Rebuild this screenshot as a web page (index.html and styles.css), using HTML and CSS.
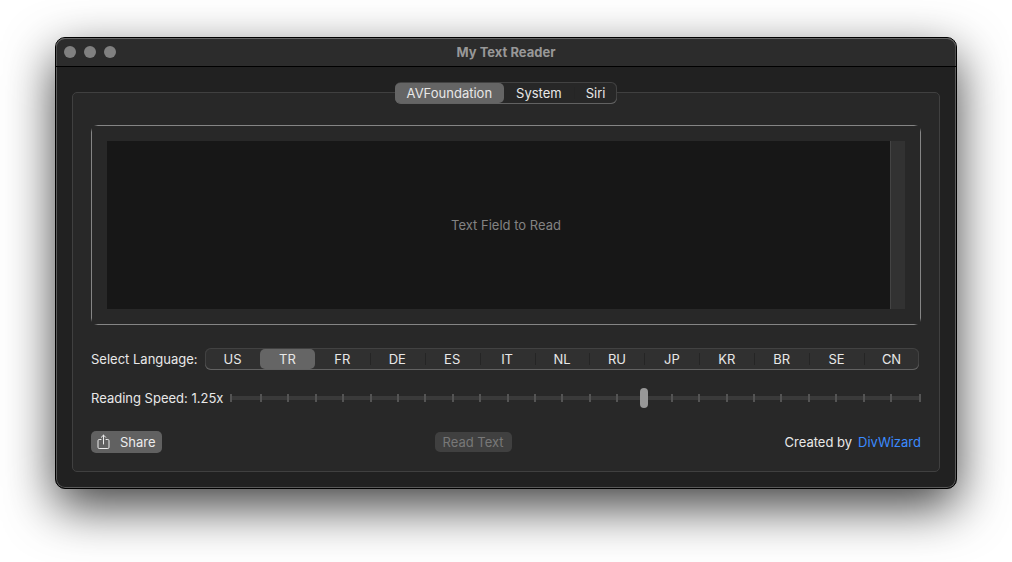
FILE: index.html
```html
<!DOCTYPE html>
<html lang="en">
<head>
<meta charset="utf-8">
<title>My Text Reader</title>
<link rel="stylesheet" href="styles.css">
</head>
<body>
<main class="window">
  <header class="titlebar">
    <div class="lights"><i></i><i></i><i></i></div>
    <h1 class="title">My Text Reader</h1>
  </header>
  <div class="content">
    <div class="segmented tabs" role="radiogroup" aria-label="Speech engine">
      <label class="segment"><input type="radio" name="engine" checked>AVFoundation</label>
      <label class="segment"><input type="radio" name="engine">System</label>
      <label class="segment"><input type="radio" name="engine">Siri</label>
    </div>
    <section class="panel">
      <div class="frame">
        <div class="editor">
          <textarea class="text" aria-label="Text to read" placeholder="Text Field to Read"></textarea>
          <div class="scroller"></div>
        </div>
      </div>
      <div class="row language">
        <span class="label" id="language-label">Select Language:</span>
        <div class="segmented languages" role="radiogroup" aria-labelledby="language-label">
          <label class="segment"><input type="radio" name="language">US</label>
          <label class="segment"><input type="radio" name="language" checked>TR</label>
          <label class="segment"><input type="radio" name="language">FR</label>
          <label class="segment"><input type="radio" name="language">DE</label>
          <label class="segment"><input type="radio" name="language">ES</label>
          <label class="segment"><input type="radio" name="language">IT</label>
          <label class="segment"><input type="radio" name="language">NL</label>
          <label class="segment"><input type="radio" name="language">RU</label>
          <label class="segment"><input type="radio" name="language">JP</label>
          <label class="segment"><input type="radio" name="language">KR</label>
          <label class="segment"><input type="radio" name="language">BR</label>
          <label class="segment"><input type="radio" name="language">SE</label>
          <label class="segment"><input type="radio" name="language">CN</label>
        </div>
      </div>
      <div class="row speed">
        <label class="label speed-label" for="speed">Reading Speed: 1.25x</label>
        <div class="slider">
          <div class="ticks"><i></i><i></i><i></i><i></i><i></i><i></i><i></i><i></i><i></i><i></i><i></i><i></i><i></i><i></i><i></i><i></i><i></i><i></i><i></i><i></i><i></i><i></i><i></i><i></i></div>
          <input class="range" id="speed" type="range" min="50" max="175" step="5" value="125">
        </div>
      </div>
      <footer class="row actions">
        <button class="button share" type="button">
          <svg width="13" height="16" viewBox="0 0 13 16" fill="none" stroke="currentColor" stroke-linecap="round" stroke-linejoin="round" aria-hidden="true">
            <path d="M4 5.5H2.2Q1 5.5 1 6.7V13.3Q1 14.5 2.2 14.5H10.8Q12 14.5 12 13.3V6.7Q12 5.5 10.8 5.5H9M6.5 10V1.2M4.3 3.3L6.5 1.1L8.7 3.3"/>
          </svg>
          Share
        </button>
        <button class="button read" type="button" disabled>Read Text</button>
        <p class="credit">Created by <a class="link" href="#">DivWizard</a></p>
      </footer>
    </section>
  </div>
</main>
</body>
</html>
```
FILE: styles.css
```css
* {
  box-sizing: border-box;
}

body {
  margin: 0;
  padding: 37px 55px 73px;
  background: #fff;
  color: #e8e8e8;
  font: 400 13px/16px Inter, "Liberation Sans", sans-serif;
}

.window {
  border: 1px solid #000;
  border-radius: 10px;
  background: #212121;
  box-shadow: inset 0 0 0 1px #5a5a5a, 0 18px 50px rgba(0, 0, 0, 0.75);
}

.titlebar {
  display: grid;
  grid-template-columns: 1fr auto 1fr;
  align-items: center;
  height: 29px;
  padding: 0 8px;
  border-bottom: 1px solid #000;
  border-radius: 9px 9px 0 0;
  background: #2c2c2c;
  box-shadow: inset 0 1px #666, inset 1px 0 #505050, inset -1px 0 #505050;
}

.lights {
  display: flex;
  gap: 8px;
}

.lights i {
  width: 12px;
  height: 12px;
  border-radius: 50%;
  background: #808080;
}

.title {
  margin: 0;
  color: #989898;
  font-size: 13px;
  font-weight: 700;
}

.content {
  display: flex;
  flex-direction: column;
  padding: 15px 16px 16px;
}

.panel {
  margin-top: -12px;
  padding: 32px 18px 18px;
  border: 1px solid #404040;
  border-radius: 5px;
  background: #282828;
}

.segmented {
  display: flex;
  height: 22px;
  padding: 1px 0;
  border-radius: 6px;
  background: #303030;
  box-shadow: inset 0 -1px #626262, inset 0 0 0 1px #424242;
}

.tabs {
  z-index: 1;
  align-self: center;
  background: #272727;
}

.segment {
  position: relative;
  display: flex;
  align-items: center;
  justify-content: center;
  border-radius: 5px;
}

.tabs .segment {
  padding: 0 12px;
}

.languages .segment {
  flex: 1;
}

.segment input {
  position: absolute;
  inset: 0;
  margin: 0;
  opacity: 0;
}

.segment + .segment::before {
  content: "";
  position: absolute;
  left: 0;
  width: 1px;
  height: 12px;
  background: #252525;
}

.segment:has(:checked) {
  background: #656565;
}

.segment:has(:checked)::before,
.segment:has(:checked) + .segment::before {
  display: none;
}

/* Hairlines on four sides that fade out before they meet at the corners */
.frame {
  --across: linear-gradient(90deg, transparent 3px, #858585 7px calc(100% - 7px), transparent calc(100% - 3px));
  --down: linear-gradient(transparent 3px, #858585 7px calc(100% - 7px), transparent calc(100% - 3px));
  padding: 16px;
  background:
    var(--across) top / 100% 1px no-repeat,
    var(--across) bottom / 100% 1px no-repeat,
    var(--down) left / 1px 100% no-repeat,
    var(--down) right / 1px 100% no-repeat;
}

.editor {
  position: relative;
  height: 168px;
}

.text {
  display: block;
  width: 100%;
  height: 100%;
  padding: 76px 16px;
  border: 0;
  outline: 0;
  resize: none;
  overflow: hidden;
  background: #171717;
  color: #e2e2e2;
  font: inherit;
  text-align: center;
}

.text::placeholder {
  color: #838383;
}

.scroller {
  position: absolute;
  top: 0;
  right: 0;
  bottom: 0;
  width: 15px;
  border-left: 1px solid #444;
  background: #323232;
}

.row {
  display: flex;
  align-items: center;
}

.language {
  margin: 23px 2px 0 0;
  gap: 8px;
}

.label {
  flex: none;
  width: 106px;
  white-space: nowrap;
}

.languages {
  flex: 1;
}

.speed {
  margin-top: 18px;
  gap: 8px;
}

.speed-label {
  width: 131px;
}

.slider {
  display: grid;
  flex: 1;
  align-items: center;
}

.ticks,
.range {
  grid-area: 1 / 1;
}

.ticks {
  display: flex;
  justify-content: space-between;
  height: 8px;
  padding: 0 27px 0 28px;
  border: solid #545454;
  border-width: 0 2px;
  background: linear-gradient(#3a3a3a, #3a3a3a) center / 100% 4px no-repeat;
}

.ticks i {
  width: 2px;
  background: #545454;
}

.range {
  width: 100%;
  height: 20px;
  margin: 0;
  appearance: none;
  background: none;
}

.range::-webkit-slider-thumb {
  width: 8px;
  height: 20px;
  appearance: none;
  border-radius: 4px;
  background: #989898;
}

.actions {
  justify-content: space-between;
  margin-top: 23px;
}

.button {
  display: flex;
  align-items: center;
  border: 0;
  border-radius: 5px;
  font: inherit;
}

.share {
  height: 22px;
  gap: 10px;
  padding: 0 6px;
  background: #616161;
  color: #ececec;
}

.read {
  height: 20px;
  padding: 0 8px;
  background: #404040;
  color: #787878;
}

.credit {
  display: flex;
  gap: 6px;
  margin: 0;
}

.link {
  color: #3b8bff;
  text-decoration: none;
}
```
